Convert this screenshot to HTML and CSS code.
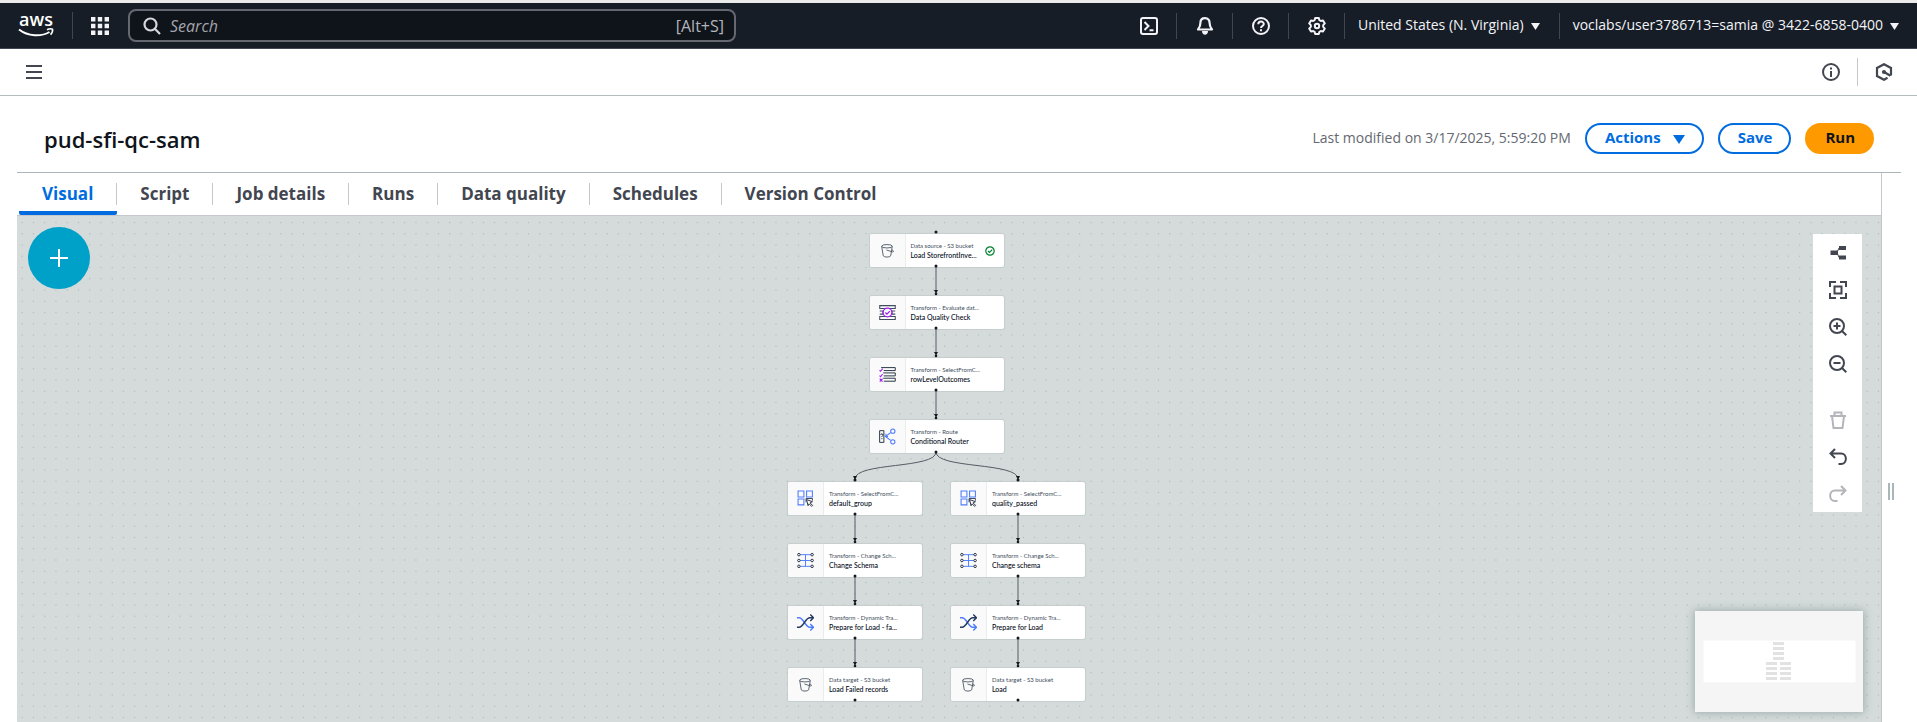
FILE: index.html
```html
<!DOCTYPE html>
<html lang="en">
<head>
<meta charset="utf-8">
<title>pud-sfi-qc-sam</title>
<link rel="stylesheet" href="styles.css">
</head>
<body>
<svg class="defs" aria-hidden="true">
  <symbol id="i-bucket" viewBox="0 0 16 16"><g fill="none" stroke="#414d5c" stroke-width=".8"><ellipse cx="7.500" cy="4" rx="5" ry="1.600"/><path d="M2.500 4l1.500 9c1 1.600 6 1.600 7 0L12.500 4M7 7.500l5.500 1.800c1.500.4 1.500-.9-.3-2"/></g></symbol>
  <symbol id="i-quality" viewBox="0 0 16 16"><g fill="none" stroke="#414d5c"><path d="M.7 1.500h14.600v2.800H.7zM.7 11.700h14.600v2.800H.7zM.7 6.500h3v3h-3M15.300 6.500h-3v3h3"/></g><circle cx="8" cy="8" r="4.100" fill="#fafafa" stroke="#a020f0" stroke-width="1.200"/><path d="M6 8l1.500 1.500L10.200 6.700" fill="none" stroke="#a020f0" stroke-width="1.200"/></symbol>
  <symbol id="i-rows" viewBox="0 0 16 16"><path d="M2 1.500h13.300v2.800H4.500M4 6.500h11.300v2.800H4.500M4 11.500h11.300v2.800H4.500" fill="none" stroke="#232f3e" stroke-width=".9"/><path d="M.5 4l1 1 2-2.500M.5 9l1 1 2-2.500M.7 12l2.600 2.600M3.300 12L.7 14.600" fill="none" stroke="#a020f0"/></symbol>
  <symbol id="i-route" viewBox="0 0 16 16"><path d="M.6 2.500h4v11h-4zM1.700 6.500c0-1.500 2-1.500 2 0 0 1-1 .8-1 2M2.700 9.500v1" fill="none" stroke="#232f3e" stroke-width=".9"/><g fill="none" stroke="#4d7cfe"><circle cx="13" cy="3" r="2"/><circle cx="13" cy="13" r="2"/><path d="M11 4.300L6 8l5 3.700M6.500 5.500v2.500h2"/></g></symbol>
  <symbol id="i-select" viewBox="0 0 16 16"><path d="M1 1h5.500v5.500H1zM9 1h5.500v5.500H9zM1 8.500h5.500V14H1z" fill="none" stroke="#4d7cfe"/><path d="M9 9l5.500 2-2.200 1.100 2.400 2.400-.9.9-2.400-2.400-1 1.800z" fill="#fff" stroke="#232f3e" stroke-width=".9"/><path d="M8.500 11.500v-3.500h6v2" fill="none" stroke="#232f3e" stroke-width=".8"/></symbol>
  <symbol id="i-schema" viewBox="0 0 16 16"><path d="M3 2.500h10M3 8h10M3 13.500h10M8 2.500v11" fill="none" stroke="#4d7cfe" stroke-width=".9"/><g fill="#fafafa" stroke="#232f3e" stroke-width=".9"><circle cx="1.800" cy="2.500" r="1.200"/><circle cx="1.800" cy="8" r="1.200"/><circle cx="1.800" cy="13.500" r="1.200"/><circle cx="14.200" cy="2.500" r="1.200"/><circle cx="14.200" cy="8" r="1.200"/><circle cx="14.200" cy="13.500" r="1.200"/></g></symbol>
  <symbol id="i-dynamic" viewBox="0 0 16 16"><path d="M0 3.500h2c4 0 6 9 10 9h3.500M12.500 9.500l3 3-3 3" fill="none" stroke="#4d7cfe" stroke-width="1.300"/><path d="M0 12.500h2c4 0 6-9 10-9h3.500M12.500.5l3 3-3 3" fill="none" stroke="#23395d" stroke-width="1.300"/></symbol>
</svg>

<header class="topbar">
  <a class="logo" href="#" aria-label="AWS home">
    <svg width="36" height="32" viewBox="0 -8 36 32"><text x="18" y="12" text-anchor="middle" class="logo-text">aws</text><path d="M1 15.500C10 22.500 23 23 31.500 18" fill="none" stroke="#fff" stroke-width="2"/><path d="M29 15.700c2-1 4.500-1 5.500-.5.300 1.500-.4 4-2 5.500" fill="none" stroke="#fff" stroke-width="1.600"/></svg>
  </a>
  <button class="services" aria-label="Services">
    <svg width="18" height="18" viewBox="0 0 18 18" fill="#f3f3f7"><path d="M0 0h4.400v4.400H0zM6.800 0h4.400v4.400H6.800zM13.600 0H18v4.400h-4.400zM0 6.800h4.400v4.400H0zM6.800 6.800h4.400v4.400H6.800zM13.600 6.800H18v4.400h-4.400zM0 13.600h4.400V18H0zM6.800 13.600h4.400V18H6.800zM13.600 13.600H18V18h-4.400z"/></svg>
  </button>
  <label class="search">
    <svg width="18" height="18" viewBox="0 0 18 18" fill="none" stroke="#d5d9de" stroke-width="2.200"><circle cx="7.500" cy="7.500" r="6"/><path d="M11.800 11.800L17 17"/></svg>
    <input type="search" placeholder="Search" aria-label="Search">
    <span class="shortcut">[Alt+S]</span>
  </label>
  <nav class="utilities" aria-label="Utilities">
    <button class="util" aria-label="CloudShell"><svg width="18" height="18" viewBox="0 0 18 18" fill="none" stroke="#f3f3f7" stroke-width="2"><rect x="1" y="1" width="16" height="16" rx="2"/><path d="M4.500 5l4 4-4 4M9.500 13.200h4"/></svg></button>
    <button class="util" aria-label="Notifications"><svg width="18" height="18" viewBox="0 0 18 18"><path d="M9 1.200c-3 0-4.600 2-4.600 4.800 0 3.500-1 4.500-2.400 6.500h14c-1.400-2-2.400-3-2.400-6.500C13.600 3.200 12 1.200 9 1.200z" fill="none" stroke="#f3f3f7" stroke-width="2.200" stroke-linejoin="round"/><path d="M6 14h6c0 5-6 5-6 0z" fill="#f3f3f7"/></svg></button>
    <button class="util" aria-label="Help"><svg width="18" height="18" viewBox="0 0 18 18" fill="none" stroke="#f3f3f7" stroke-width="2"><circle cx="9" cy="9" r="8"/><path d="M6.300 7.300c0-3.600 5.500-3.500 5.500-.3 0 2-2.800 2-2.800 4M9 12.200v2"/></svg></button>
    <button class="util" aria-label="Settings"><svg width="18" height="18" viewBox="0 0 18 18" fill="none" stroke="#f3f3f7" stroke-width="2" stroke-linejoin="round"><path d="M7.200 1h3.600l.6 2.200 1.400.8 2.200-.6 1.800 3-1.600 1.700v1.800l1.600 1.700-1.800 3-2.200-.6-1.400.8-.6 2.200H7.200l-.6-2.200-1.400-.8-2.200.6-1.800-3 1.600-1.700V8.100L1.200 6.400l1.800-3 2.200.6 1.400-.8z"/><circle cx="9" cy="9" r="2.200"/></svg></button>
    <button class="util text">United States (N. Virginia)<svg width="9" height="7" viewBox="0 0 9 7"><path d="M0 0h9L4.500 7z" fill="#f3f3f7"/></svg></button>
    <button class="util text">voclabs/user3786713=samia @ 3422-6858-0400<svg width="9" height="7" viewBox="0 0 9 7"><path d="M0 0h9L4.500 7z" fill="#f3f3f7"/></svg></button>
  </nav>
</header>

<div class="subbar">
  <button class="plain" aria-label="Open navigation"><svg width="16" height="14" viewBox="0 0 16 14" fill="none" stroke="#424650" stroke-width="2"><path d="M0 1h16M0 7h16M0 13h16"/></svg></button>
  <div class="panels">
    <button class="plain" aria-label="Info"><svg width="18" height="18" viewBox="0 0 18 18" fill="none" stroke="#424650" stroke-width="2"><circle cx="9" cy="9" r="8"/><path d="M9 8v6M9 4.500v2"/></svg></button>
    <button class="plain" aria-label="Amazon Q"><svg width="18" height="18" viewBox="0 0 18 18" fill="none" stroke="#424650" stroke-width="2.200"><path d="M12.500 14.800L9 16.800l-7-3.800V5l7-3.800L16 5v7.500"/><path d="M9 9l6.500 3.800"/><circle cx="9" cy="9" r="1" fill="#424650"/></svg></button>
  </div>
</div>

<main class="page">
  <section class="job">
    <h1>pud-sfi-qc-sam</h1>
    <div class="actions">
      <span class="modified">Last modified on 3/17/2025, 5:59:20 PM</span>
      <button class="btn">Actions<svg width="12" height="10" viewBox="0 0 12 10"><path d="M0 1h12L6 10z" fill="#006ce0"/></svg></button>
      <button class="btn">Save</button>
      <button class="btn primary">Run</button>
    </div>
  </section>
  <div class="workspace">
    <div class="editor">
      <nav class="tabs" aria-label="Job views">
        <a class="tab active" href="#"><span>Visual</span></a>
        <a class="tab" href="#"><span>Script</span></a>
        <a class="tab" href="#"><span>Job details</span></a>
        <a class="tab" href="#"><span>Runs</span></a>
        <a class="tab" href="#"><span>Data quality</span></a>
        <a class="tab" href="#"><span>Schedules</span></a>
        <a class="tab" href="#"><span>Version Control</span></a>
      </nav>
      <div class="canvas">
        <svg class="dots" width="100%" height="100%" aria-hidden="true">
          <pattern id="dots" width="45" height="45" patternUnits="userSpaceOnUse">
            <g id="dot-row" fill="#b3bcbc"><circle cx="5.200" cy="6.500" r=".7"/><circle cx="16.450" cy="6.500" r=".7"/><circle cx="27.700" cy="6.500" r=".7"/><circle cx="38.950" cy="6.500" r=".7"/></g>
            <use href="#dot-row" y="11.250"/><use href="#dot-row" y="22.500"/><use href="#dot-row" y="33.750"/>
          </pattern>
          <rect width="100%" height="100%" fill="url(#dots)"/>
        </svg>

        <div class="stage">
          <svg class="edges" width="297" height="480" viewBox="0 0 297 480" aria-hidden="true">
            <defs>
              <g id="port"><circle r="1.500" fill="#16191f"/></g>
              <g id="link"><path d="M0 0v28" stroke="#545b64" fill="none"/><circle r="1.500" fill="#16191f"/><path d="M-2 24h4L0 27.500z" fill="#16191f"/><circle cy="28" r="1.300" fill="#16191f"/></g>
            </defs>
            <use href="#port" x="148" y="10"/>
            <use href="#link" x="148" y="44"/><use href="#link" x="148" y="106"/><use href="#link" x="148" y="168"/>
            <path d="M148 230C148 247 67 240 67 257M148 230C148 247 230 240 230 257" fill="none" stroke="#545b64"/>
            <use href="#port" x="148" y="230"/>
            <path d="M65 254h4l-2 4zM228 254h4l-2 4z" fill="#16191f"/><use href="#port" x="67" y="258"/><use href="#port" x="230" y="258"/>
            <use href="#link" x="67" y="292"/><use href="#link" x="67" y="354"/><use href="#link" x="67" y="416"/>
            <use href="#link" x="230" y="292"/><use href="#link" x="230" y="354"/><use href="#link" x="230" y="416"/>
            <use href="#port" x="67" y="478"/><use href="#port" x="230" y="478"/>
          </svg>
          <div class="row"><article class="node"><div class="pic"><svg><use href="#i-bucket"/></svg></div><div class="info"><p>Data source - S3 bucket</p><h2>Load StorefrontInve...</h2></div><svg class="ok" viewBox="0 0 10 10" fill="none" stroke="#00802f" stroke-width="1.200"><circle cx="5" cy="5" r="4.200"/><path d="M3 5l1.500 1.500L7.200 3.700"/></svg></article></div>
          <div class="row"><article class="node"><div class="pic"><svg><use href="#i-quality"/></svg></div><div class="info"><p>Transform - Evaluate dat...</p><h2>Data Quality Check</h2></div></article></div>
          <div class="row"><article class="node"><div class="pic"><svg><use href="#i-rows"/></svg></div><div class="info"><p>Transform - SelectFromC...</p><h2>rowLevelOutcomes</h2></div></article></div>
          <div class="row"><article class="node"><div class="pic"><svg><use href="#i-route"/></svg></div><div class="info"><p>Transform - Route</p><h2>Conditional Router</h2></div></article></div>
          <div class="row">
            <article class="node"><div class="pic"><svg><use href="#i-select"/></svg></div><div class="info"><p>Transform - SelectFromC...</p><h2>default_group</h2></div></article>
            <article class="node"><div class="pic"><svg><use href="#i-select"/></svg></div><div class="info"><p>Transform - SelectFromC...</p><h2>quality_passed</h2></div></article>
          </div>
          <div class="row">
            <article class="node"><div class="pic"><svg><use href="#i-schema"/></svg></div><div class="info"><p>Transform - Change Sch...</p><h2>Change Schema</h2></div></article>
            <article class="node"><div class="pic"><svg><use href="#i-schema"/></svg></div><div class="info"><p>Transform - Change Sch...</p><h2>Change schema</h2></div></article>
          </div>
          <div class="row">
            <article class="node"><div class="pic"><svg><use href="#i-dynamic"/></svg></div><div class="info"><p>Transform - Dynamic Tra...</p><h2>Prepare for Load - fa...</h2></div></article>
            <article class="node"><div class="pic"><svg><use href="#i-dynamic"/></svg></div><div class="info"><p>Transform - Dynamic Tra...</p><h2>Prepare for Load</h2></div></article>
          </div>
          <div class="row">
            <article class="node"><div class="pic"><svg><use href="#i-bucket"/></svg></div><div class="info"><p>Data target - S3 bucket</p><h2>Load Failed records</h2></div></article>
            <article class="node"><div class="pic"><svg><use href="#i-bucket"/></svg></div><div class="info"><p>Data target - S3 bucket</p><h2>Load</h2></div></article>
          </div>
        </div>

        <button class="add" aria-label="Add node"><svg width="18" height="18" viewBox="0 0 18 18" stroke="#fff" stroke-width="2"><path d="M9 0v18M0 9h18"/></svg></button>

        <div class="tools" role="toolbar" aria-label="Canvas tools">
          <button aria-label="Auto layout"><svg viewBox="0 0 18 18" fill="#424650"><path d="M10 2h7v4h-7zM10 11.500h7v4h-7zM1.500 6.500H9V11H1.500z"/><path d="M10 4L8 8.500l2 5" fill="none" stroke="#424650"/></svg></button>
          <button aria-label="Fit to screen"><svg viewBox="0 0 18 18" fill="none" stroke="#424650" stroke-width="2"><path d="M1 6V1h6M11 1h6v5M17 12v5h-6M7 17H1v-5M5.500 5.500h7v7h-7z"/></svg></button>
          <button aria-label="Zoom in"><svg viewBox="0 0 18 18" fill="none" stroke="#424650" stroke-width="2"><circle cx="8" cy="8" r="7"/><path d="M13 13l4.300 4.300M8 4.500v7M4.500 8h7"/></svg></button>
          <button aria-label="Zoom out"><svg viewBox="0 0 18 18" fill="none" stroke="#424650" stroke-width="2"><circle cx="8" cy="8" r="7"/><path d="M13 13l4.300 4.300M4.500 8h7"/></svg></button>
          <button class="apart" aria-label="Delete" disabled><svg viewBox="0 0 18 18" fill="none" stroke="#b4b4bb" stroke-width="2"><path d="M1 5h16M5.500 4.500V1.500h7v3M3 5l1.500 12h9L15 5"/></svg></button>
          <button aria-label="Undo"><svg viewBox="0 0 18 18" fill="none" stroke="#424650" stroke-width="2"><path d="M6 1L1.500 5.500 6 10M1.500 5.500H12c6.500 0 6.500 10.500 0 10.500H9.500"/></svg></button>
          <button aria-label="Redo" disabled><svg viewBox="0 0 18 18" fill="none" stroke="#b4b4bb" stroke-width="2"><path d="M12 1l4.500 4.500L12 10M16.500 5.500H6c-6.500 0-6.500 10.500 0 10.500h2.500"/></svg></button>
        </div>

        <div class="minimap">
          <svg width="168" height="101" viewBox="0 0 168 101" aria-label="Minimap"><rect x="8.500" y="29.500" width="152" height="42" fill="#fff"/><path d="M78 31h11v3H78zM78 36h11v3H78zM78 41h11v3H78zM78 46h11v3H78zM71 51h11v3H71zM85 51h11v3H85zM71 56h11v3H71zM85 56h11v3H85zM71 61h11v3H71zM85 61h11v3H85zM71 66h11v3H71zM85 66h11v3H85z" fill="#e2e2e2"/></svg>
        </div>
      </div>
    </div>
    <div class="splitter" role="separator" aria-orientation="vertical"><i></i></div>
  </div>
</main>
</body>
</html>
```
FILE: styles.css
```css
* { box-sizing: border-box; }
body {
  margin: 0;
  height: 100vh;
  display: flex;
  flex-direction: column;
  overflow: hidden;
  background: #fff;
  color: #0f141a;
  font-family: "Open Sans", "Noto Sans", sans-serif;
}
button { border: 0; background: none; padding: 0; font: inherit; color: inherit; }
h1, h2, p { margin: 0; }
svg { display: block; flex: none; }
.defs { position: absolute; width: 0; height: 0; }

.topbar {
  display: flex;
  align-items: center;
  height: 49px;
  padding-right: 18px;
  border-top: 3px solid #ebebeb;
  border-bottom: 1px solid #424650;
  background: #161d26;
  color: #f3f3f7;
}
.logo { padding: 0 18px 8px; }
.logo-text { font: 600 18px "Open Sans", sans-serif; fill: #fff; }
.services { display: flex; align-items: center; height: 27px; padding: 0 19px 0 18px; border-left: 1px solid #424650; }
.search {
  display: flex;
  align-items: center;
  width: 608px;
  height: 33px;
  padding: 0 10px 0 13px;
  gap: 9px;
  border: 2px solid #656871;
  border-radius: 8px;
  background: #0f141a;
}
.search input {
  flex: 1;
  min-width: 0;
  border: 0;
  padding: 0;
  background: none;
  color: #fff;
  font: italic 16px "Open Sans", sans-serif;
  outline: 0;
}
.search input::placeholder { color: #a4a4ad; opacity: 1; }
.shortcut { color: #b4b4bb; font-size: 16px; }
.utilities { display: flex; align-items: center; margin-left: auto; }
.util { display: flex; align-items: center; gap: 7px; height: 26px; padding: 0 18px 0 19px; border-left: 1px solid #424650; white-space: nowrap; }
.util:first-child { border-left: 0; }
.util.text { padding: 0 19px 2px 13px; font-size: 14px; }
.util.text:last-child { padding-right: 0; }
.util.text svg { margin-top: 3px; }

.subbar {
  display: flex;
  align-items: center;
  justify-content: space-between;
  height: 47px;
  padding: 0 24px 0 26px;
  border-bottom: 1px solid #b4bcbe;
}
.panels { display: flex; align-items: center; }
.panels .plain { display: flex; align-items: center; height: 28px; }
.panels .plain + .plain { margin-left: 17px; padding-left: 17px; border-left: 1px solid #c6c6cd; }

.page { flex: 1; display: flex; flex-direction: column; min-height: 0; padding: 0 16px 0 17px; }
.job {
  display: flex;
  align-items: center;
  justify-content: space-between;
  height: 77px;
  padding: 8px 27px 0;
  border-bottom: 1px solid #aab7b8;
}
h1 { padding-top: 2px; font-size: 22px; line-height: 28px; font-weight: 600; }
.actions { display: flex; align-items: center; gap: 14px; }
.modified { padding-bottom: 2px; color: #656871; font-size: 14px; }
.btn {
  display: flex;
  align-items: center;
  gap: 12px;
  height: 31px;
  padding: 0 17px 2px 18px;
  border: 2px solid #006ce0;
  border-radius: 16px;
  color: #006ce0;
  font-size: 15px;
  font-weight: 700;
}
.btn svg { margin-top: 3px; }
.btn.primary { border-color: #ff9900; background: #ff9900; color: #0f141a; }

.workspace { flex: 1; display: flex; min-height: 0; }
.editor { flex: 1; display: flex; flex-direction: column; min-width: 0; border-right: 1px solid #c6c6cd; }
.tabs { display: flex; align-items: stretch; height: 43px; padding-left: 2px; border-bottom: 1px solid #c6c6cd; }
.tab { display: flex; align-items: center; padding-top: 4px; color: #424650; font-size: 17px; font-weight: 700; text-decoration: none; border-bottom: 4px solid transparent; }
.tab span { display: block; padding: 0 23px; line-height: 22px; border-right: 1px solid #c6c6cd; }
.tab:last-child span { border-right: 0; }
.tab.active { color: #006ce0; border-bottom-color: #006ce0; border-radius: 2px; }

.canvas { position: relative; flex: 1; min-height: 0; overflow: hidden; background: #d5dbdb; }
.dots { position: absolute; inset: 0; }
.stage { position: absolute; top: 18px; left: 50%; margin-left: -161px; width: 297px; display: flex; flex-direction: column; gap: 29px; }
.edges { position: absolute; top: -12px; left: 0; z-index: 1; }
.row { display: flex; justify-content: center; gap: 29px; }
.node { position: relative; display: flex; width: 134px; height: 33px; background: #fff; border-radius: 2px; box-shadow: 0 0 1px 1px #c5cdcd; overflow: hidden; }
.pic { display: flex; align-items: center; justify-content: center; width: 36px; background: #fafafa; border-right: 1px solid #eaeded; }
.pic svg { width: 17px; height: 17px; }
.info { display: flex; flex-direction: column; justify-content: center; padding: 0 0 1px 5px; font-family: Lato, "Open Sans", sans-serif; white-space: nowrap; }
.info p { color: #414d5c; font-size: 6px; line-height: 9px; }
.info h2 { color: #000716; font-size: 7px; line-height: 10px; font-weight: 500; }
.ok { position: absolute; right: 9px; top: 12px; width: 10px; height: 10px; }

.add {
  position: absolute;
  left: 11px;
  top: 11px;
  display: flex;
  align-items: center;
  justify-content: center;
  width: 62px;
  height: 62px;
  border-radius: 50%;
  background: #00a1c9;
}
.tools { position: absolute; right: 19px; top: 18px; display: flex; flex-direction: column; width: 49px; background: #fff; }
.tools button { display: flex; align-items: center; justify-content: center; height: 37px; }
.tools .apart { margin-top: 19px; }
.tools svg { width: 18px; height: 18px; }
.minimap { position: absolute; right: 18px; bottom: 10px; background: #f5f5f5; box-shadow: 0 0 8px 1px rgba(60, 90, 90, .35); }
.splitter { display: flex; align-items: center; width: 19px; padding: 0 6px; }
.splitter i { width: 6px; height: 17px; margin-top: 87px; border: 2px solid #aab7b8; border-width: 0 2px; }
```
